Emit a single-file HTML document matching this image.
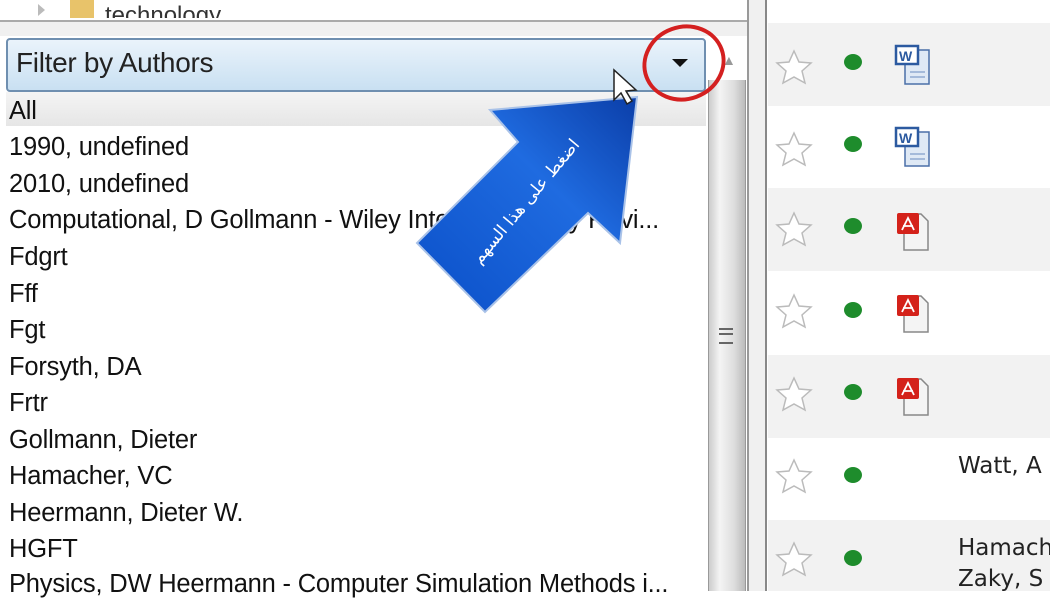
<!DOCTYPE html>
<html><head><meta charset="utf-8"><style>
body{margin:0;width:1050px;height:591px;overflow:hidden;background:#fff;font-family:"Liberation Sans","DejaVu Sans",sans-serif;position:relative}
.a{position:absolute}
.li{position:absolute;left:9px;font-size:25.5px;color:#111;letter-spacing:-0.2px;white-space:nowrap}
.row{position:absolute;left:768px;width:282px;height:83px}
</style></head><body>
<div class="a" style="left:0;top:0;width:748px;height:20px;background:#fff;border-bottom:2px solid #aaa"></div>
<div class="a" style="left:70px;top:0;width:24px;height:18px;background:#e8c36a"></div>
<div class="a" style="left:38px;top:4px;width:0;height:0;border-top:6px solid transparent;border-bottom:6px solid transparent;border-left:7px solid #bbb"></div>
<div class="a" style="left:105px;top:0px;font-size:24px;color:#333;height:18px;overflow:hidden;line-height:32px">technology</div>
<div class="a" style="left:0;top:22px;width:748px;height:14px;background:#f0f0f0"></div>
<div class="a" style="left:6px;top:38px;width:696px;height:50px;border:2px solid #6f8fb0;border-radius:4px;background:linear-gradient(#eaf3fb,#c9e0f2)"></div>
<div class="a" style="left:16px;top:47px;font-size:28px;color:#222;letter-spacing:-0.3px">Filter by Authors</div>
<div class="a" style="left:672px;top:59px;width:0;height:0;border-left:8px solid transparent;border-right:8px solid transparent;border-top:8px solid #111"></div>
<div class="a" style="left:722px;top:52px;font-size:14px;color:#999">▲</div>
<div class="a" style="left:6px;top:92px;width:700px;height:34px;background:linear-gradient(#f4f4f4,#e6e6e6)"></div>
<div class="li" style="top:97px">All</div>
<div class="li" style="top:133px">1990, undefined</div>
<div class="li" style="top:170px">2010, undefined</div>
<div class="li" style="top:206px">Computational, D Gollmann - Wiley Interdisciplinary Revi...</div>
<div class="li" style="top:243px">Fdgrt</div>
<div class="li" style="top:280px">Fff</div>
<div class="li" style="top:316px">Fgt</div>
<div class="li" style="top:353px">Forsyth, DA</div>
<div class="li" style="top:389px">Frtr</div>
<div class="li" style="top:426px">Gollmann, Dieter</div>
<div class="li" style="top:462px">Hamacher, VC</div>
<div class="li" style="top:499px">Heermann, Dieter W.</div>
<div class="li" style="top:535px">HGFT</div>
<div class="li" style="top:570px">Physics, DW Heermann - Computer Simulation Methods i...</div>
<div class="a" style="left:708px;top:80px;width:36px;height:511px;background:linear-gradient(90deg,#ccc,#f4f4f4 30%,#ddd 70%,#bbb);border-left:1px solid #999;border-right:1px solid #999"></div>
<div class="a" style="left:719px;top:328px;width:14px;height:12px;border-top:2px solid #666;border-bottom:2px solid #666"><div style="margin-top:3px;height:2px;background:#666"></div></div>
<div class="a" style="left:747px;top:0;width:2px;height:591px;background:#999"></div>
<div class="a" style="left:749px;top:0;width:16px;height:591px;background:#f0f0f0"></div>
<div class="a" style="left:765px;top:0;width:2px;height:591px;background:#888"></div>
<div class="row" style="top:23px;background:#f2f2f2"></div>
<div class="row" style="top:188px;background:#f2f2f2"></div>
<div class="row" style="top:355px;background:#f2f2f2"></div>
<div class="row" style="top:520px;background:#f2f2f2;height:71px"></div>
<svg class="a" style="left:768px;top:0" width="282" height="591">
<defs><g id="st"><polygon points="0,-17 5,-6 17,-5 8,3 11,15 0,9 -11,15 -8,3 -17,-5 -5,-6" fill="#fff" stroke="#bbb" stroke-width="1.5"/></g>
<g id="w"><rect x="11" y="-14" width="24" height="34" fill="#dfe9f5" stroke="#4a6fa8" stroke-width="1.5"/><rect x="2" y="-18" width="22" height="18" fill="#fff" stroke="#2c5aa0" stroke-width="2.5"/><text x="5" y="-3" font-size="14" font-weight="bold" fill="#2c5aa0" font-family="Liberation Sans">W</text><line x1="16" y1="8" x2="31" y2="8" stroke="#6a8bc0"/><line x1="16" y1="13" x2="31" y2="13" stroke="#6a8bc0"/></g>
<g id="p"><path d="M10 -14 H27 L34 -7 V22 H10 Z" fill="#f4f4f4" stroke="#888" stroke-width="1.5"/><rect x="3" y="-15" width="22" height="21" rx="2" fill="#d4221a"/><path d="M8 2 L14 -10 L20 2 M9 -2 H19" stroke="#fff" stroke-width="1.8" fill="none"/></g></defs>
<use href="#st" x="26" y="68"/><use href="#st" x="26" y="150"/><use href="#st" x="26" y="230"/><use href="#st" x="26" y="312"/><use href="#st" x="26" y="395"/><use href="#st" x="26" y="477"/><use href="#st" x="26" y="560"/>
<g fill="#1e8c2c"><ellipse cx="85" cy="62" rx="9" ry="8"/><ellipse cx="85" cy="144" rx="9" ry="8"/><ellipse cx="85" cy="226" rx="9" ry="8"/><ellipse cx="85" cy="310" rx="9" ry="8"/><ellipse cx="85" cy="392" rx="9" ry="8"/><ellipse cx="85" cy="475" rx="9" ry="8"/><ellipse cx="85" cy="558" rx="9" ry="8"/></g>
<use href="#w" x="126" y="64"/><use href="#w" x="126" y="146"/>
<use href="#p" x="126" y="228"/><use href="#p" x="126" y="310"/><use href="#p" x="126" y="393"/>
<text x="190" y="473" font-size="23" fill="#222" font-family="DejaVu Sans">Watt, A</text>
<text x="190" y="555" font-size="23" fill="#222" font-family="DejaVu Sans">Hamach</text>
<text x="190" y="586" font-size="23" fill="#222" font-family="DejaVu Sans">Zaky, S</text>
</svg>
<svg class="a" style="left:0;top:0" width="1050" height="591">
<defs><linearGradient id="g" x1="0" y1="1" x2="1" y2="0"><stop offset="0" stop-color="#0a4fc8"/><stop offset="0.6" stop-color="#1f6be0"/><stop offset="1" stop-color="#0b3ea8"/></linearGradient></defs>
<polygon points="637,97 620,243 588,213 485,312 417,243 518,142 490,110" fill="url(#g)" stroke="#a9c2e8" stroke-width="2"/>
<text x="0" y="0" transform="translate(530,205) rotate(-50)" text-anchor="middle" font-size="17" fill="#fff" font-family="'DejaVu Sans',sans-serif">اضغط على هذا السهم</text>
<path d="M614 70 L614 100 L621 93 L627 104 L632 101 L626 91 L636 90 Z" fill="#fff" stroke="#222" stroke-width="1.5"/>
<ellipse cx="684" cy="63" rx="40" ry="36" transform="rotate(-20 684 63)" fill="none" stroke="#d42020" stroke-width="4"/>
</svg>
</body></html>
